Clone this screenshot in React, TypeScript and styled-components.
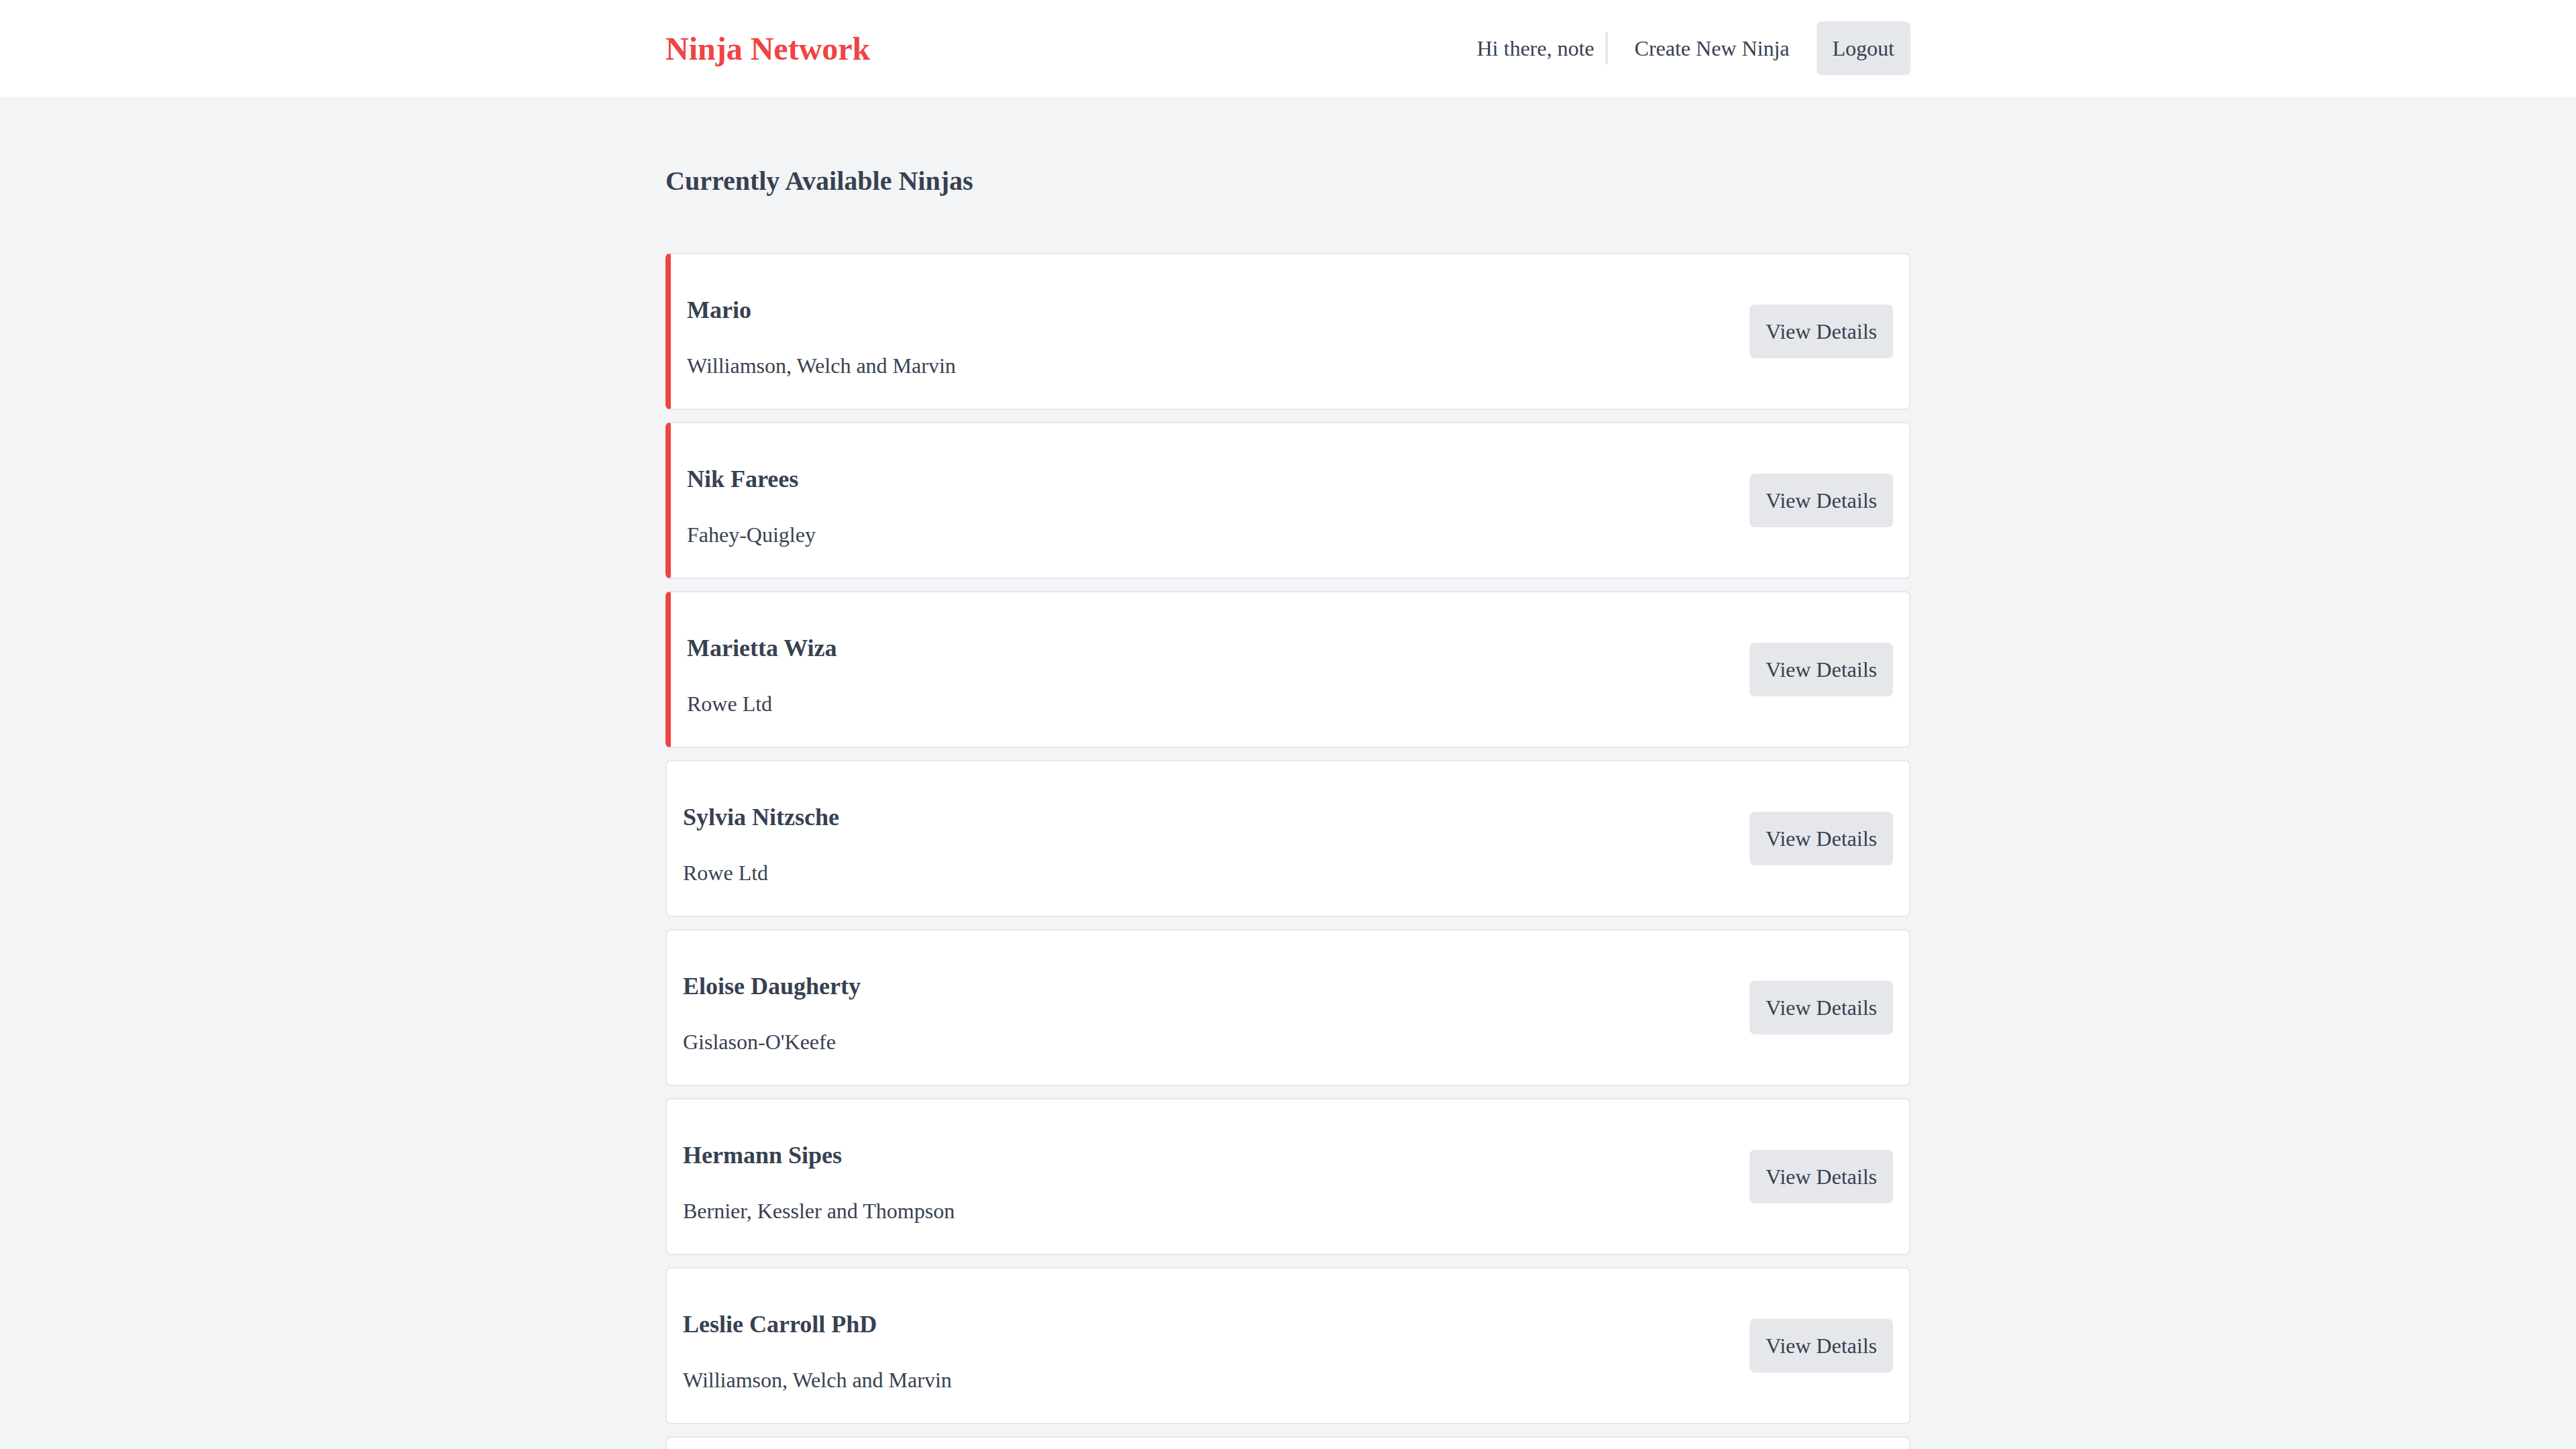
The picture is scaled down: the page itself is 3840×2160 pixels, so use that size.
import styled, { createGlobalStyle } from "styled-components";

type Ninja = {
  id: number;
  name: string;
  company: string;
  featured?: boolean;
};

const ninjas: Ninja[] = [
  { id: 1, name: "Mario", company: "Williamson, Welch and Marvin", featured: true },
  { id: 2, name: "Nik Farees", company: "Fahey-Quigley", featured: true },
  { id: 3, name: "Marietta Wiza", company: "Rowe Ltd", featured: true },
  { id: 4, name: "Sylvia Nitzsche", company: "Rowe Ltd" },
  { id: 5, name: "Eloise Daugherty", company: "Gislason-O'Keefe" },
  { id: 6, name: "Hermann Sipes", company: "Bernier, Kessler and Thompson" },
  { id: 7, name: "Leslie Carroll PhD", company: "Williamson, Welch and Marvin" },
  { id: 8, name: "Kurtis Weissnat", company: "Hoeger LLC" },
];

const GlobalStyle = createGlobalStyle`
  * {
    box-sizing: border-box;
  }

  body {
    margin: 0;
    font-family: "Liberation Serif", "Times New Roman", serif;
    background: #f3f4f6;
    color: #374151;
  }
`;

const Header = styled.header`
  background: #ffffff;
  height: 144px;
`;

const Bar = styled.div`
  width: 1856px;
  height: 100%;
  margin: 0 auto;
  display: flex;
  align-items: center;
  justify-content: space-between;
`;

const Logo = styled.a`
  font-size: 48px;
  font-weight: 700;
  color: #ef4444;
  text-decoration: none;
  line-height: normal;
`;

const Nav = styled.nav`
  display: flex;
  align-items: center;
  gap: 16px;
  font-size: 32px;
  line-height: 48px;
`;

const Greeting = styled.span`
  padding-right: 16px;
  border-right: 4px solid #e5e7eb;
`;

const NavLink = styled.a`
  padding: 16px 24px;
  color: #374151;
  text-decoration: none;
`;

const GrayButton = styled.button`
  border: none;
  border-radius: 8px;
  padding: 16px 24px;
  background: #e5e7eb;
  color: #374151;
  font-family: inherit;
  font-size: 32px;
  line-height: 48px;
  cursor: pointer;
`;

const Main = styled.main`
  width: 1856px;
  margin: 0 auto;
  padding-top: 98px;
`;

const Heading = styled.h2`
  margin: 0 0 79px;
  font-size: 40px;
  line-height: 56px;
  font-weight: 700;
`;

const List = styled.div`
  display: flex;
  flex-direction: column;
  gap: 18px;
`;

const Card = styled.div<{ $featured?: boolean }>`
  display: flex;
  align-items: center;
  justify-content: space-between;
  padding: 0 24px;
  background: #ffffff;
  border: 2px solid #e5e7eb;
  border-left: ${({ $featured }) =>
    $featured ? "8px solid #ef4444" : "2px solid #e5e7eb"};
  border-radius: 8px;
`;

const Info = styled.div`
  padding: 55px 0 40px;
`;

const Name = styled.h3`
  margin: 0;
  font-size: 36px;
  line-height: 56px;
  font-weight: 700;
`;

const Company = styled.p`
  margin: 31px 0 0;
  font-size: 32px;
  line-height: 48px;
`;

export default function App() {
  return (
    <>
      <GlobalStyle />
      <Header>
        <Bar>
          <Logo href="#">Ninja Network</Logo>
          <Nav>
            <Greeting>Hi there, note</Greeting>
            <NavLink href="#">Create New Ninja</NavLink>
            <GrayButton>Logout</GrayButton>
          </Nav>
        </Bar>
      </Header>
      <Main>
        <Heading>Currently Available Ninjas</Heading>
        <List>
          {ninjas.map((ninja) => (
            <Card key={ninja.id} $featured={ninja.featured}>
              <Info>
                <Name>{ninja.name}</Name>
                <Company>{ninja.company}</Company>
              </Info>
              <GrayButton>View Details</GrayButton>
            </Card>
          ))}
        </List>
      </Main>
    </>
  );
}
